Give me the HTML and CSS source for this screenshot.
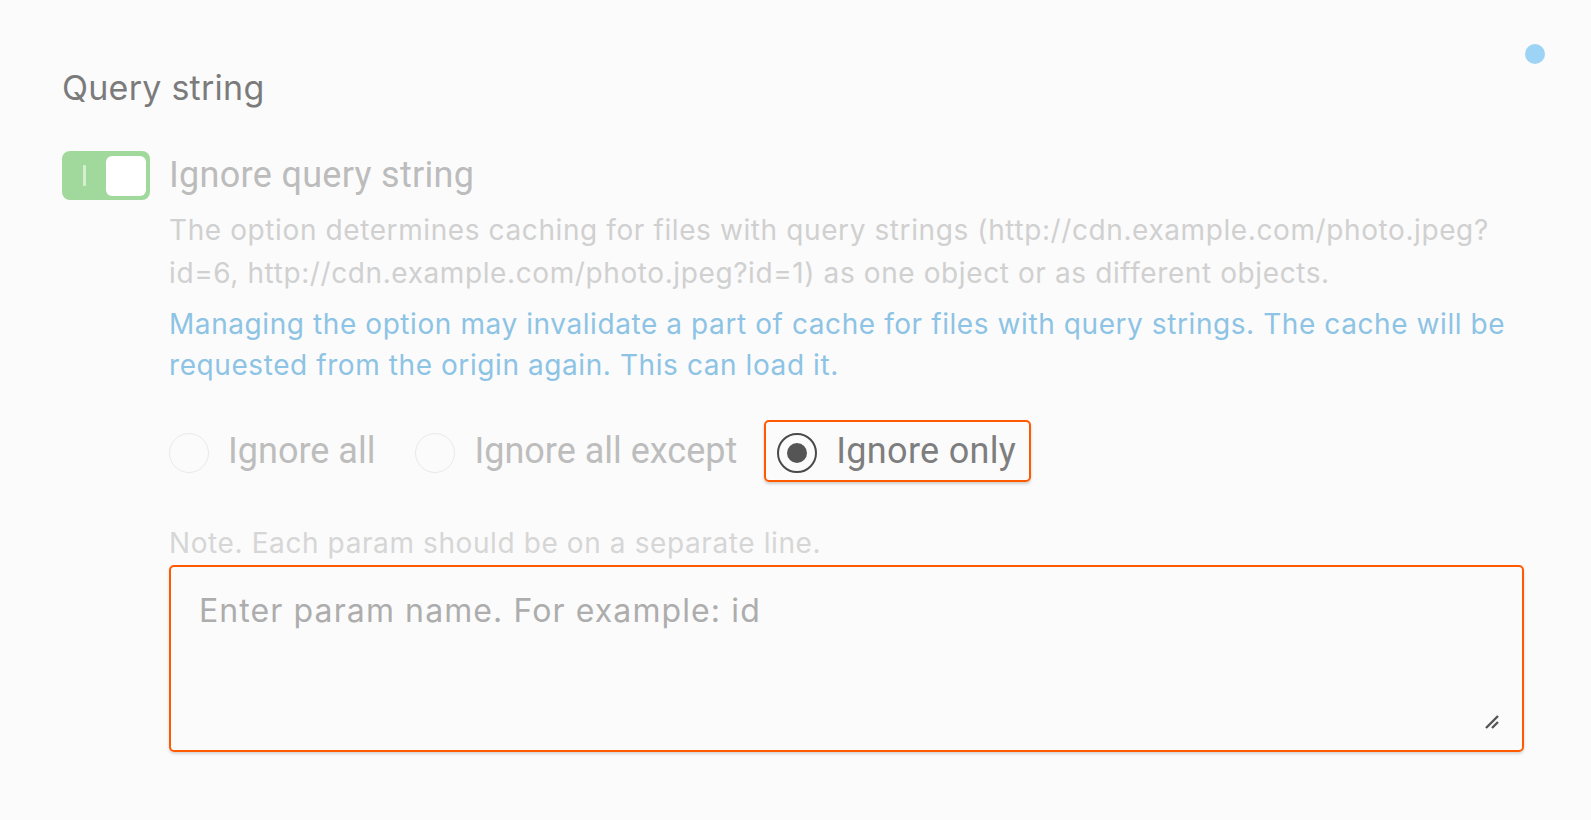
FILE: index.html
```html
<!DOCTYPE html>
<html lang="en">
<head>
<meta charset="utf-8">
<title>Query string</title>
<link rel="stylesheet" href="styles.css">
</head>
<body>
<div class="page">
  <span class="status-dot"></span>
  <h2 class="section-title">Query string</h2>
  <div class="option-row">
    <div class="toggle"><span class="toggle-bar"></span><span class="toggle-knob"></span></div>
    <div class="option-body">
      <div class="option-label">Ignore query string</div>
      <p class="desc">The option determines caching for files with query strings (http://cdn.example.com/photo.jpeg?<br>id=6, http://cdn.example.com/photo.jpeg?id=1) as one object or as different objects.</p>
      <p class="warn">Managing the option may invalidate a part of cache for files with query strings. The cache will be<br>requested from the origin again. This can load it.</p>
      <div class="radio-group">
        <label class="radio"><span class="radio-circle"></span><span class="radio-text">Ignore all</span></label>
        <label class="radio"><span class="radio-circle"></span><span class="radio-text">Ignore all except</span></label>
        <label class="radio selected"><span class="radio-circle"><span class="radio-dot"></span></span><span class="radio-text">Ignore only</span></label>
      </div>
      <div class="note">Note. Each param should be on a separate line.</div>
      <div class="textarea">
        <span class="placeholder">Enter param name. For example: id</span>
        <svg class="resize" width="16" height="16" viewBox="0 0 16 16"><path d="M2 14 L14 2 M8 14 L14 8" stroke="#555" stroke-width="2.4" fill="none"/></svg>
      </div>
    </div>
  </div>
</div>
</body>
</html>
```
FILE: styles.css
```css
html, body {
  margin: 0;
  padding: 0;
  background: #fbfbfb;
}
body {
  font-family: Roboto, "Liberation Sans", sans-serif;
  width: 1591px;
  height: 820px;
  overflow: hidden;
}
.page {
  position: relative;
  padding: 66px 66px 0 62px;
}
.status-dot {
  position: absolute;
  left: 1525px;
  top: 44px;
  width: 20px;
  height: 20px;
  border-radius: 50%;
  background: #9dd3f5;
}
.section-title {
  margin: 0;
  font-family: Inter, Roboto, sans-serif;
  font-size: 34px;
  letter-spacing: 0.25px;
  font-weight: 400;
  line-height: 44px;
  color: #7b7b7b;
}
.option-row {
  display: flex;
  gap: 19px;
  margin-top: 41px;
}
.toggle {
  flex: none;
  width: 88px;
  height: 49px;
  border-radius: 8px;
  background: #a0d99b;
  display: flex;
  align-items: center;
  box-sizing: border-box;
  padding: 0 4px 0 21px;
  justify-content: space-between;
}
.toggle-bar {
  width: 3px;
  height: 21px;
  background: #d3f1cd;
  border-radius: 1px;
}
.toggle-knob {
  width: 40px;
  height: 40px;
  border-radius: 6px;
  background: #fff;
}
.option-body {
  flex: 1;
  max-width: 1355px;
}
.option-label {
  font-size: 36px;
  letter-spacing: 0.3px;
  line-height: 48px;
  color: #bcbcbc;
}
.desc {
  margin: 10px 0 0;
  font-family: Inter, Roboto, sans-serif;
  font-size: 28px;
  letter-spacing: 0.6px;
  line-height: 43px;
  color: #d0d0d0;
}
.warn {
  margin: 9px 0 0;
  font-family: Inter, Roboto, sans-serif;
  font-size: 28px;
  letter-spacing: 0.58px;
  line-height: 40.5px;
  color: #8dc3e4;
}
.radio-group {
  display: flex;
  gap: 12px;
  margin: 35px 0 0 -13px;
  align-items: center;
}
.radio {
  display: flex;
  align-items: center;
  gap: 19px;
  height: 62px;
  box-sizing: border-box;
  padding: 0 13px 0 11px;
  border: 2px solid transparent;
  border-radius: 5px;
}
.radio.selected {
  border-color: #ff5a00;
  box-shadow: 0 2px 3px rgba(0, 0, 0, 0.18);
}
.radio-circle {
  width: 40px;
  height: 40px;
  box-sizing: border-box;
  border-radius: 50%;
  border: 1px solid #e9e9e9;
  display: flex;
  align-items: center;
  justify-content: center;
  margin-top: 4px;
}
.selected .radio-circle {
  border: 2px solid #4a4a4a;
}
.radio-dot {
  width: 20px;
  height: 20px;
  border-radius: 50%;
  background: #555;
}
.radio-text {
  font-size: 36px;
  line-height: 48px;
  color: #bdbdbd;
}
.selected .radio-text {
  color: #7e7e7e;
  letter-spacing: 0.3px;
}
.note {
  margin-top: 41px;
  font-family: Inter, Roboto, sans-serif;
  font-size: 28px;
  letter-spacing: 0.6px;
  line-height: 40px;
  color: #d6d6d6;
}
.textarea {
  position: relative;
  margin-top: 2px;
  height: 187px;
  box-sizing: border-box;
  border: 2px solid #ff5a00;
  border-radius: 5px;
  padding: 22px 28px;
  box-shadow: 0 2px 3px rgba(0, 0, 0, 0.15);
}
.placeholder {
  font-family: Inter, Roboto, sans-serif;
  font-size: 32px;
  letter-spacing: 1.1px;
  line-height: 44px;
  color: #adadad;
}
.resize {
  position: absolute;
  right: 22px;
  bottom: 20px;
}
```
